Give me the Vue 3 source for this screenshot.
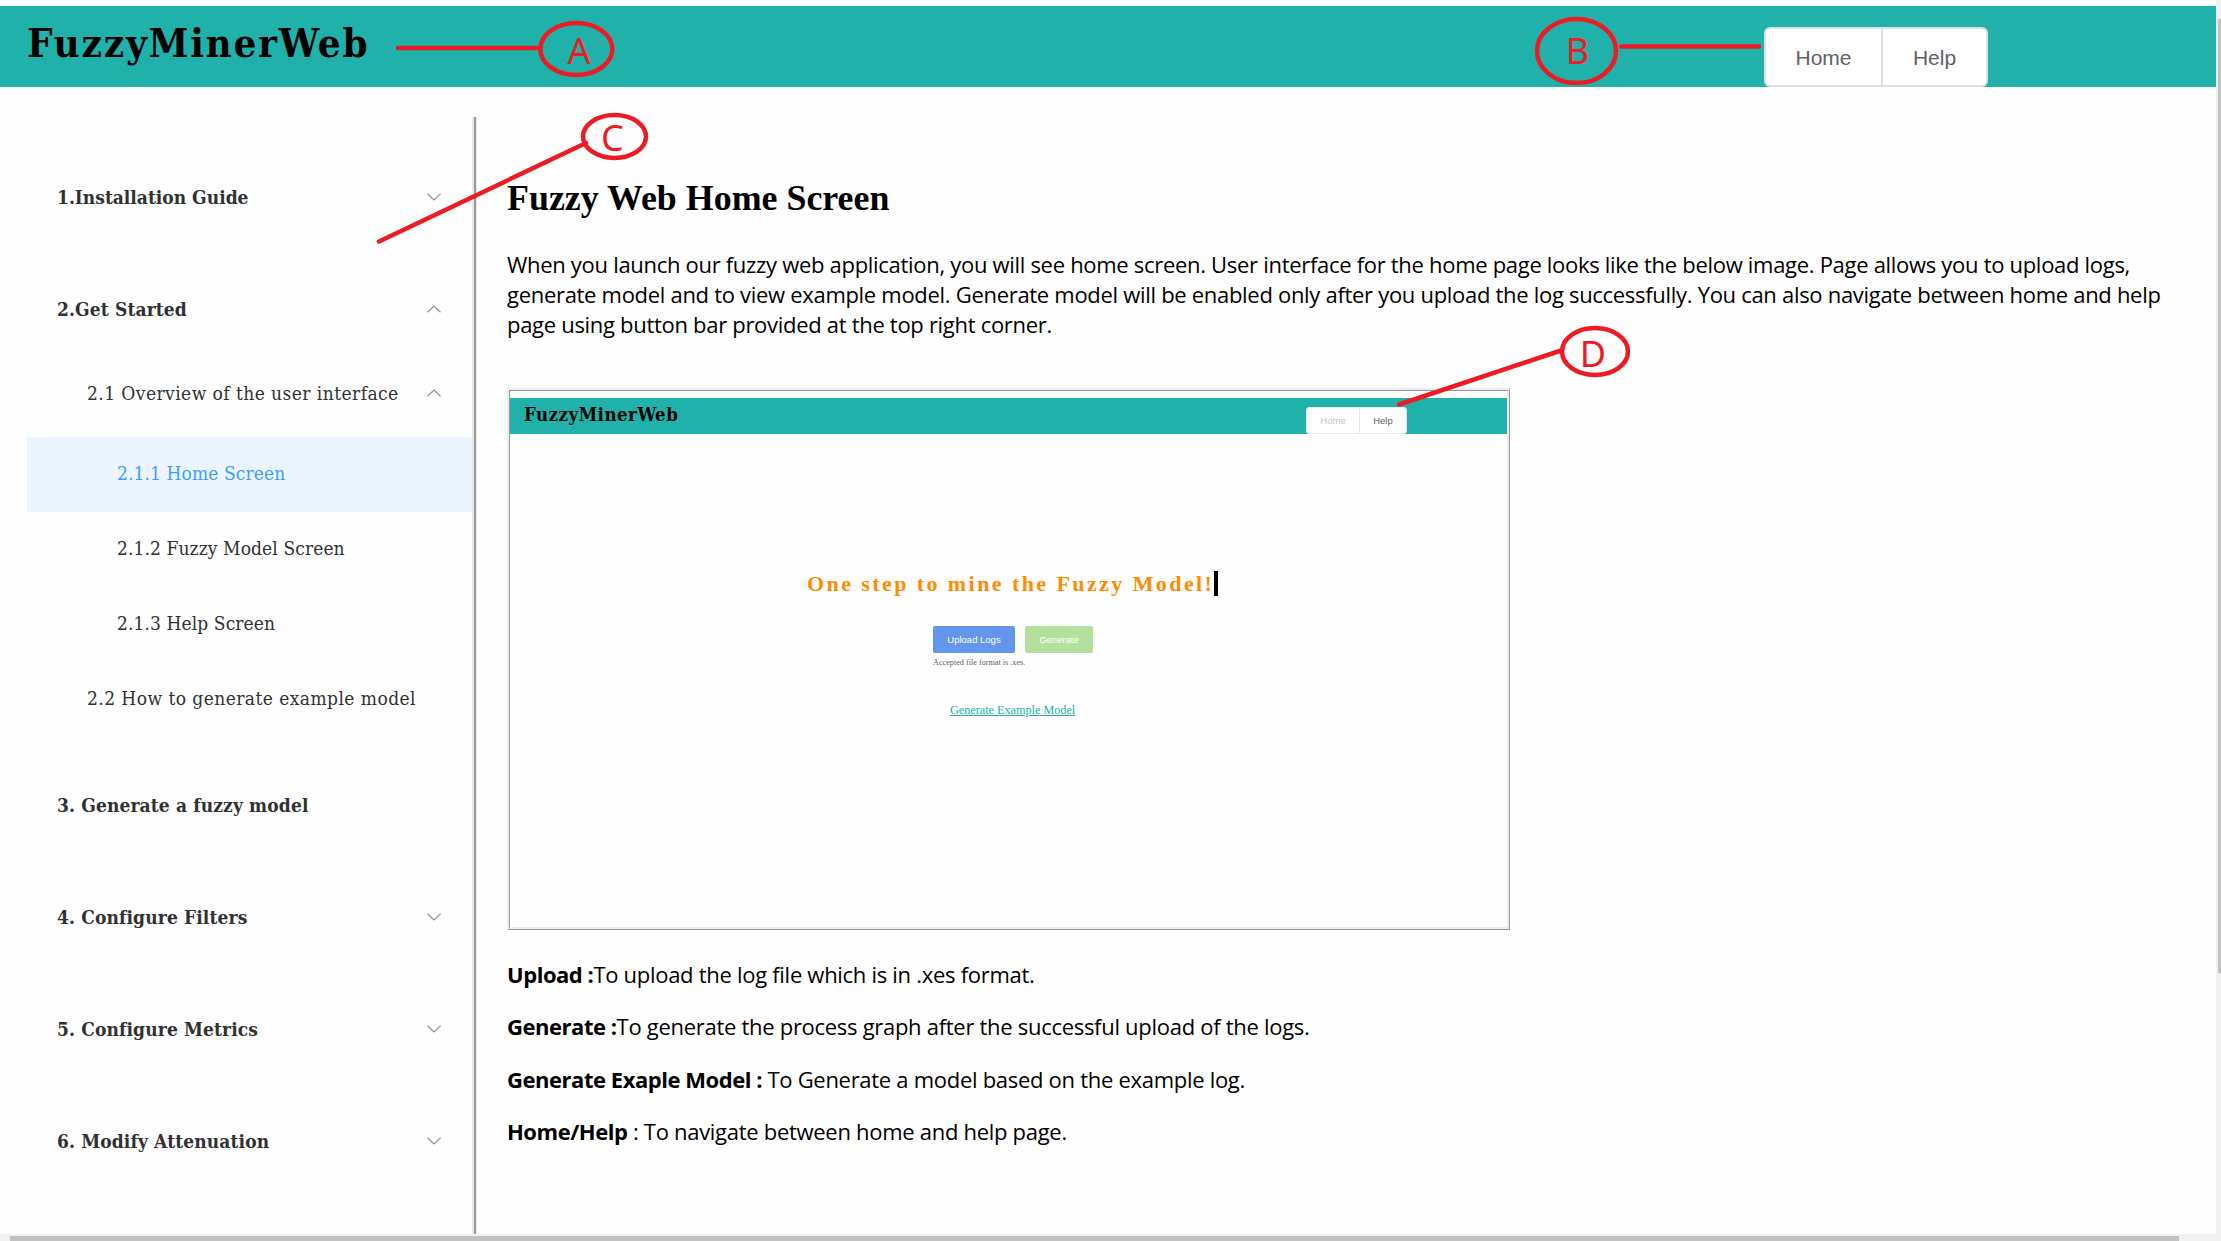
<script setup>
const before = [{ label: '1.Installation Guide' }]
const screens = ['2.1.1 Home Screen', '2.1.2 Fuzzy Model Screen', '2.1.3 Help Screen']
const after = [
  { label: '3. Generate a fuzzy model', leaf: true },
  { label: '4. Configure Filters' },
  { label: '5. Configure Metrics' },
  { label: '6. Modify Attenuation' },
]
</script>

<template>
  <div class="page">
    <div class="view">
      <header class="bar">
        <h1>FuzzyMinerWeb</h1>
        <div class="nav"><span class="home">Home</span><span>Help</span></div>
      </header>
      <div class="body">
        <aside>
          <div v-for="i in before" :key="i.label" class="item top tight">
            <span>{{ i.label }}</span>
            <svg class="chev" viewBox="0 0 14 8"><path d="M.5 .7 7 7 13.500 .7" /></svg>
          </div>
          <div class="item top open">
            <span>2.Get Started</span>
            <svg class="chev" viewBox="0 0 14 8"><path d="M.5 7.300 7 1 13.500 7.300" /></svg>
          </div>
          <div class="sub">
            <div class="item second">
              <span>2.1 Overview of the user interface</span>
              <svg class="chev" viewBox="0 0 14 8"><path d="M.5 7.300 7 1 13.500 7.300" /></svg>
            </div>
            <div v-for="(s, n) in screens" :key="s" class="item third" :class="{ active: n === 0 }"><span>{{ s }}</span></div>
            <div class="item second leaf"><span>2.2 How to generate example model</span></div>
          </div>
          <div v-for="i in after" :key="i.label" class="item top">
            <span>{{ i.label }}</span>
            <svg v-if="!i.leaf" class="chev" viewBox="0 0 14 8"><path d="M.5 .7 7 7 13.500 .7" /></svg>
          </div>
        </aside>
        <div class="rule"></div>
        <main>
          <h2>Fuzzy Web Home Screen</h2>
          <p class="intro">
            <span>When you launch our fuzzy web application, you will see home screen. User interface for the home page looks like the below image. Page allows you to upload logs,</span><br>
            <span>generate model and to view example model. Generate model will be enabled only after you upload the log successfully. You can also navigate between home and help</span><br>
            <span>page using button bar provided at the top right corner.</span>
          </p>
          <div class="frame">
            <div class="shot">
              <div class="mini-bar">
                <b>FuzzyMinerWeb</b>
                <div class="mini-nav"><span class="dim">Home</span><span>Help</span></div>
              </div>
              <div class="hero"><span>One step to mine the Fuzzy Model!</span><i></i></div>
              <div class="actions">
                <div class="btn blue">Upload Logs</div>
                <div class="btn green">Generate</div>
              </div>
              <div class="hint">Accepted file format is .xes.</div>
              <div class="link">Generate Example Model</div>
            </div>
          </div>
          <p class="def"><b>Upload :</b>To upload the log file which is in .xes format.</p>
          <p class="def"><b>Generate :</b>To generate the process graph after the successful upload of the logs.</p>
          <p class="def"><b>Generate Exaple Model :</b> To Generate a model based on the example log.</p>
          <p class="def"><b>Home/Help</b> : To navigate between home and help page.</p>
        </main>
      </div>
    </div>
    <div class="vscroll"><div></div></div>
    <div class="hscroll"><div></div></div>
    <svg class="notes" viewBox="0 0 2221 1241">
      <g fill="none" stroke="#ed1c24" stroke-width="4.5" stroke-linecap="round">
        <ellipse cx="576.300" cy="49" rx="36" ry="26" />
        <path d="M398 48H538" />
        <ellipse cx="1576.500" cy="51" rx="39.500" ry="32" />
        <path d="M1621 46.500H1759" />
        <ellipse cx="614.500" cy="136.500" rx="31.500" ry="21.500" />
        <path d="M586 143 379 241.500" />
        <ellipse cx="1595" cy="351.500" rx="33" ry="23.500" />
        <path d="M1561 350.500 1399 404.500" />
      </g>
      <g class="letters" fill="#ed1c24" text-anchor="middle">
        <text x="579" y="64">A</text>
        <text x="1577.500" y="63.500">B</text>
        <text x="612.500" y="151">C</text>
        <text x="1593" y="366.500">D</text>
      </g>
    </svg>
  </div>
</template>

<style>
body { margin: 0; overflow: hidden; background: #fff; }
</style>

<style scoped>
.page {
  position: relative;
  width: 2221px;
  height: 1241px;
  overflow: hidden;
  display: grid;
  grid-template-columns: 2216px 5px;
  grid-template-rows: 1234px 7px;
  background: #fefefe;
  color: #000;
  white-space: nowrap;
}
.view { overflow: hidden; padding-top: 6px; box-sizing: border-box; }
.bar {
  height: 81px;
  background: #20b2aa;
  display: flex;
  justify-content: space-between;
  align-items: flex-end;
  padding: 0 228px 0 27px;
}
h1 {
  margin: 0 0 13px;
  font: bold 40px/62px "DejaVu Serif Condensed", "DejaVu Serif", serif;
  font-stretch: condensed;
  letter-spacing: 1.75px;
}
.nav {
  display: flex;
  box-sizing: border-box;
  width: 224px;
  height: 60px;
  border: 2px solid #dcdfe6;
  border-radius: 6px;
  background: #fff;
  font: 21px/58px "Liberation Sans", Arial, sans-serif;
  color: #606266;
  text-align: center;
}
.nav span { flex: 1 1 0; }
.nav .home { box-sizing: border-box; flex: 0 0 117px; border-right: 2px solid #dcdfe6; }
.body { display: flex; padding-top: 30px; height: 1117px; }
aside {
  width: 445px;
  margin-left: 27px;
  padding-top: 24px;
  font: 19px/30px "DejaVu Serif Condensed", "DejaVu Serif", serif;
  font-stretch: condensed;
  color: #303133;
}
.item { display: flex; align-items: center; justify-content: space-between; box-sizing: border-box; padding-right: 31px; }
.top { height: 112px; padding-left: 30px; font-weight: bold; letter-spacing: 0.13px; }
.tight { letter-spacing: 0; }
.open { height: 98px; padding-top: 14px; }
.sub { margin-bottom: 12px; }
.second { height: 86px; padding: 0 31px 3px 60px; letter-spacing: 0.44px; }
.leaf { height: 75px; }
.third { height: 75px; padding: 0 0 3px 90px; letter-spacing: 0.1px; }
.active { background: #ecf5ff; color: #409eff; }
.chev { width: 14px; height: 8px; fill: none; stroke: #909399; stroke-width: 1.2; }
.rule { width: 1px; border-left: 2px solid #e8e8e8; border-right: 1px solid #e8e8e8; background: #999; flex: none; padding-left: 1px; }
main { margin-left: 30px; padding-top: 56px; font: 22px/30px "Open Sans", "Noto Sans", sans-serif; }
h2 { margin: 0; font: bold 35.900px/50px "Liberation Serif", "Times New Roman", serif; }
.intro { margin: 26px 0 0; height: 91px; letter-spacing: -0.3px; }
.frame {
  box-sizing: border-box;
  width: 1003px;
  height: 542px;
  margin: 48px 0 29px;
  border: 2px solid #ececec;
  border-right: 1px solid #999;
  border-bottom: 1px solid #999;
  background: #fefefe;
}
.shot { box-sizing: border-box; height: 100%; border: 1px solid #999; border-right: 2px solid #ececec; border-bottom: 2px solid #ececec; padding-top: 7px; display: flex; flex-direction: column; }
.mini-bar { flex: none; height: 36px; background: #20b2aa; display: flex; justify-content: space-between; align-items: flex-end; padding: 0 100px 0 14px; }
.mini-bar b { font: bold 18.500px/24px "DejaVu Serif Condensed", "DejaVu Serif", serif; font-stretch: condensed; letter-spacing: 0.5px; margin-bottom: 7px; }
.mini-nav { display: flex; box-sizing: border-box; width: 101px; height: 27px; border: 1px solid #e4e7ed; border-radius: 3px; background: #fff; font: 9.500px/26px "Liberation Sans", Arial, sans-serif; color: #606266; text-align: center; }
.mini-nav span { flex: 1; }
.mini-nav .dim { box-sizing: border-box; flex: 0 0 53px; color: #c0c4cc; border-right: 1px solid #e4e7ed; }
.hero { display: flex; align-items: center; margin: 137px 0 0 297px; height: 25px; }
.hero span { font: bold 22px/27px "Liberation Serif", serif; letter-spacing: 2.420px; color: #ff8c00; }
.hero i { width: 4px; height: 25px; background: #000; }
.actions { display: flex; gap: 10px; margin: 30px 0 0 423px; }
.btn { height: 27px; border-radius: 2px; color: #fff; font: 9.500px/28px "Liberation Sans", Arial, sans-serif; text-align: center; }
.blue { width: 82px; background: #6495ed; }
.green { width: 68px; background: #b3e19d; }
.hint { margin: 5px 0 0 423px; font: 8.200px/10px "Liberation Serif", serif; color: #606266; }
.link { margin: 34px 0 0 440px; font: 12.200px/16px "Liberation Serif", serif; color: #20b2aa; text-decoration: underline; }
.def { margin: 0 0 22.400px; letter-spacing: -0.29px; }
.def b { letter-spacing: -0.46px; }
.vscroll { background: #f1f1f1; padding: 19px 0 0 2px; }
.vscroll div { height: 954px; background: #c1c1c1; }
.hscroll { grid-column: 1 / 3; background: #f1f1f1; padding: 2px 0 0 10px; }
.hscroll div { width: 2169px; height: 5px; background: #c1c1c1; }
.notes { position: absolute; inset: 0; width: 2221px; height: 1241px; }
.letters { font: 36px "Noto Sans", sans-serif; }
</style>
